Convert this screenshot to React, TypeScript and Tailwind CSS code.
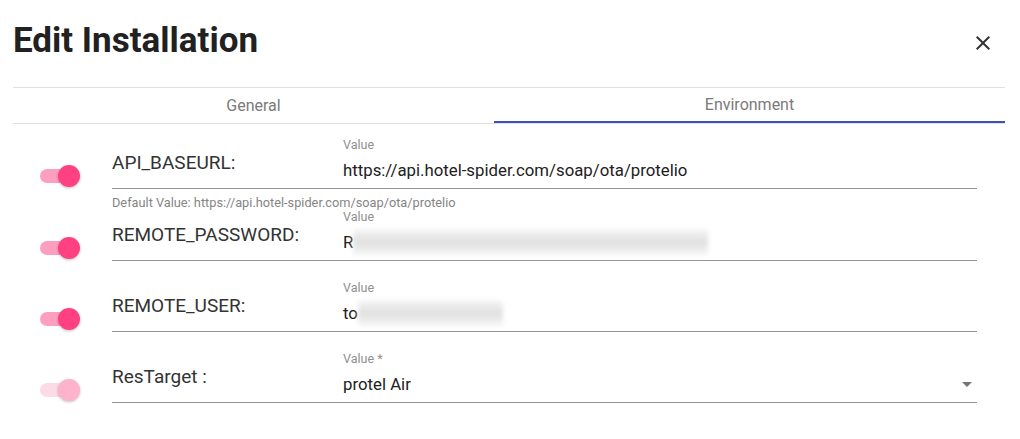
import React from "react";

function Toggle({ disabled }: { disabled?: boolean }) {
  return (
    <div className="relative w-[40px] h-[22px] flex items-center">
      <div
        className={
          "w-[34px] h-[14px] rounded-full " +
          (disabled ? "bg-[#fcdbe6]" : "bg-[#ff9fc0]")
        }
      />
      <div
        className={
          "absolute right-0 top-0 w-[22px] h-[22px] rounded-full shadow-[0_1px_3px_rgba(0,0,0,0.25)] " +
          (disabled ? "bg-[#ffb2cc]" : "bg-[#ff4081]")
        }
      />
    </div>
  );
}

function Blur({ w }: { w: number }) {
  return (
    <span
      className="inline-block align-middle h-[26px] bg-[linear-gradient(180deg,#f6f6f6_0%,#e0e0e0_50%,#f6f6f6_100%)] blur-[2px]"
      style={{ width: w }}
    />
  );
}

function Row({
  label,
  value,
  valueLabel = "Value",
  disabled,
  select,
  height,
  helper,
}: {
  label: string;
  value: React.ReactNode;
  valueLabel?: string;
  disabled?: boolean;
  select?: boolean;
  height: string;
  helper?: string;
}) {
  return (
    <div className="flex flex-col">
      <div className={"flex items-end " + height}>
        <div className="w-[99px] pl-[27px] pb-[2px] shrink-0">
          <Toggle disabled={disabled} />
        </div>
        <div className="w-[865px] flex items-end border-b border-[#949494]">
          <div className="w-[231px] shrink-0 pb-[12px] text-[19px] leading-[26px] text-[#333]">
            {label}
          </div>
          <div className="flex-1 flex flex-col pb-[6px]">
            <div className="text-[12.5px] leading-[14px] text-[#8f8f8f] mb-[6px]">
              {valueLabel}
            </div>
            <div className="flex items-center h-[24px] text-[16.8px] leading-[24px] text-[#212121]">
              <div className="flex-1 flex items-center">{value}</div>
              {select && (
                <svg width="24" height="24" viewBox="0 0 24 24" className="mr-[-2px]">
                  <path d="M7 10l5 5 5-5z" fill="#757575" />
                </svg>
              )}
            </div>
          </div>
        </div>
      </div>
      {helper && (
        <div className="h-0 pl-[99px]">
          <div className="pt-[7px] text-[12.75px] leading-[14px] text-[#858585]">{helper}</div>
        </div>
      )}
    </div>
  );
}

export default function App() {
  return (
    <div
      className="w-[1020px] h-[439px] bg-white overflow-hidden pl-[13px] pr-[15px]"
      style={{ fontFamily: "Roboto, 'Liberation Sans', sans-serif" }}
    >
      <div className="flex items-center justify-between h-[87px]">
        <h1 className="text-[35px] font-bold text-[#212121] leading-[40px] pb-[6px]">
          Edit Installation
        </h1>
        <svg width="24" height="24" viewBox="0 0 24 24" className="mr-[10px] mb-[2px]">
          <path
            d="M19 6.41L17.59 5 12 10.59 6.41 5 5 6.41 10.59 12 5 17.59 6.41 19 12 13.41 17.59 19 19 17.59 13.41 12z"
            fill="#333"
          />
        </svg>
      </div>
      <div className="flex border-t border-b border-[#e0e0e0] h-[37px]">
        <div className="w-[481px] flex items-center justify-center text-[16px] text-[#7a7a7a]">
          General
        </div>
        <div className="flex-1 flex flex-col">
          <div className="flex-1 flex items-center justify-center text-[16px] text-[#7a7a7a]">
            Environment
          </div>
          <div className="h-[2px] bg-[#3f51b5]" />
        </div>
      </div>
      <Row
        label="API_BASEURL:"
        value="https://api.hotel-spider.com/soap/ota/protelio"
        height="h-[65px]"
        helper="Default Value: https://api.hotel-spider.com/soap/ota/protelio"
      />
      <Row
        label="REMOTE_PASSWORD:"
        value={
          <>
            <span>R</span>
            <Blur w={355} />
          </>
        }
        height="h-[72px]"
      />
      <Row
        label="REMOTE_USER:"
        value={
          <>
            <span>to</span>
            <Blur w={145} />
          </>
        }
        height="h-[71px]"
      />
      <Row
        label="ResTarget :"
        valueLabel="Value *"
        value="protel Air"
        disabled
        select
        height="h-[71px]"
      />
    </div>
  );
}
